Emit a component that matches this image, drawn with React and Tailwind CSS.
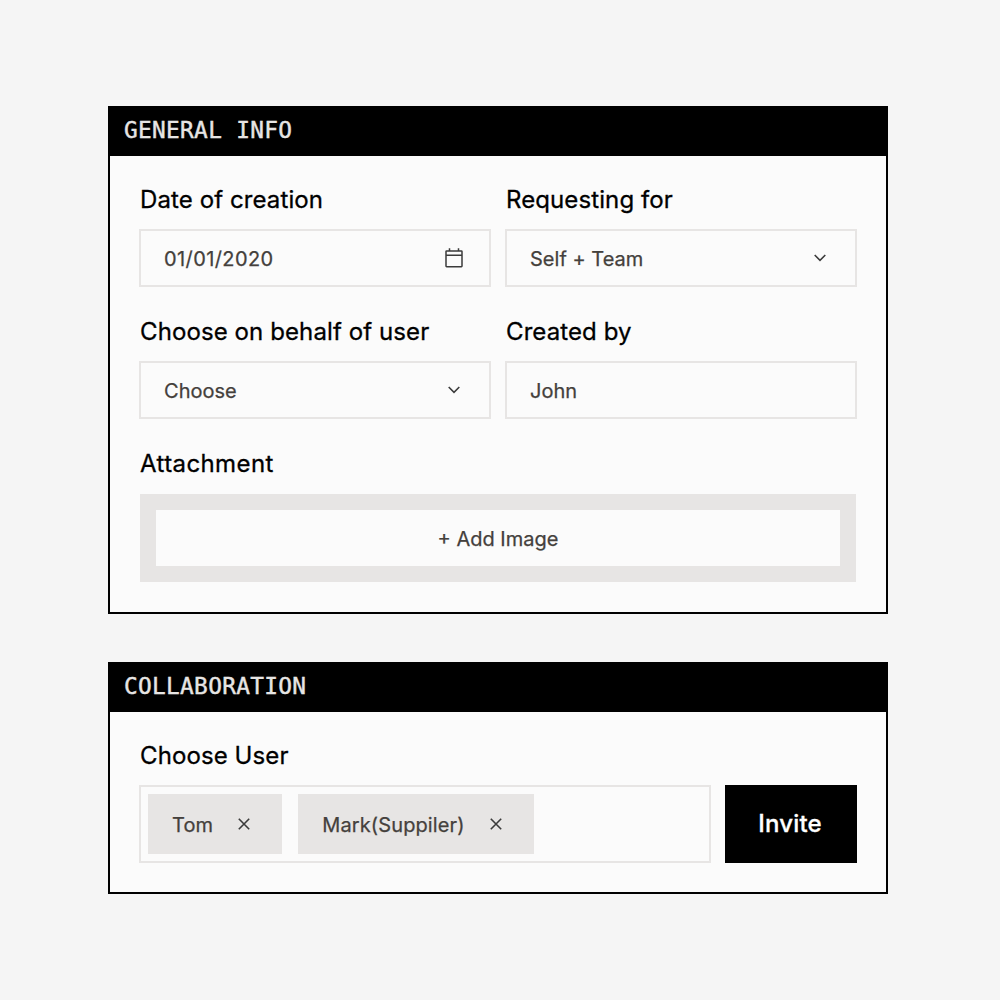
import React from 'react';

function Panel({ title, children }) {
  return (
    <section className="w-[780px] border-2 border-black bg-[#fbfbfb]">
      <h2 className="flex h-12 items-center bg-black px-3.5 pb-[3px] font-['DejaVu_Sans_Mono',monospace] text-[22.8px] tracking-[0.3px] text-[#e7e5e4] [-webkit-text-stroke:0.4px_#e7e5e4]">
        {title}
      </h2>
      {children}
    </section>
  );
}

function Chevron() {
  return (
    <svg width="24" height="24" viewBox="0 0 24 24" fill="none" stroke="#3b3b3b" strokeWidth="1.6">
      <path d="M6.7 9L12 14.3L17.3 9" />
    </svg>
  );
}

function CalendarIcon() {
  return (
    <svg width="24" height="24" viewBox="0 0 24 24" fill="none" stroke="#3b3b3b" strokeWidth="1.5">
      <rect x="4" y="5" width="16" height="15.7" rx="0.6" />
      <path d="M4 9.2H20M7.5 2.3V5M16.5 2.3V5" />
    </svg>
  );
}

function CloseIcon() {
  return (
    <svg width="14" height="14" viewBox="0 0 14 14" fill="none" stroke="#3b3b3b" strokeWidth="1.6">
      <path d="M1.8 1.8L12.2 12.2M12.2 1.8L1.8 12.2" />
    </svg>
  );
}

function Label({ children, className = 'tracking-[0.1px]' }) {
  return (
    <div className={`pl-px text-2xl leading-7 text-black [-webkit-text-stroke:0.3px_#000] ${className}`}>
      {children}
    </div>
  );
}

function Field({ label, value, icon, valueClass = 'tracking-[0.02px]' }) {
  return (
    <div>
      <Label>{label}</Label>
      <div className="mt-[15px] flex h-[58px] items-center justify-between border-2 border-[#e7e5e4] px-[23px] text-xl">
        <span className={`pt-0.5 ${valueClass}`}>{value}</span>
        {icon}
      </div>
    </div>
  );
}

function Tag({ name }) {
  return (
    <div className="flex h-[60px] items-center gap-6 bg-[#e7e5e4] pl-6 pr-[31px]">
      <span className="pt-0.5 tracking-[0.12px]">{name}</span>
      <CloseIcon />
    </div>
  );
}

export default function App() {
  return (
    <main className="flex h-[1000px] w-[1000px] flex-col gap-12 bg-[#f5f5f5] pl-[108px] pt-[106px] font-['Inter',sans-serif] text-[#44403c] [-webkit-text-stroke:0.25px_#44403c]">
      <Panel title="GENERAL INFO">
        <div className="px-[29px] py-[30px]">
          <div className="grid grid-cols-[352px_352px] gap-x-3.5 gap-y-[31px]">
            <Field
              label="Date of creation"
              value="01/01/2020"
              valueClass="tracking-[0.4px]"
              icon={<CalendarIcon />}
            />
            <Field label="Requesting for" value="Self + Team" icon={<Chevron />} />
            <Field label="Choose on behalf of user" value="Choose" icon={<Chevron />} />
            <Field label="Created by" value="John" />
          </div>
          <Label className="mt-[31px] tracking-[0.4px]">Attachment</Label>
          <div className="mx-px mt-4 bg-[#e7e5e4] p-4">
            <button className="h-14 w-full bg-[#fbfbfb] pt-0.5 text-xl">+ Add Image</button>
          </div>
        </div>
      </Panel>

      <Panel title="COLLABORATION">
        <div className="px-[29px] pb-[29px] pt-[30px]">
          <Label>Choose User</Label>
          <div className="mt-[15px] flex gap-3.5">
            <div className="flex h-[78px] w-[572px] items-center gap-4 border-2 border-[#e7e5e4] px-[7px] text-xl">
              <Tag name="Tom" />
              <Tag name="Mark(Suppiler)" />
            </div>
            <button className="h-[78px] w-[132px] bg-black pr-0.5 text-2xl font-medium tracking-[0.2px] text-white [-webkit-text-stroke:0.3px_#fff]">
              Invite
            </button>
          </div>
        </div>
      </Panel>
    </main>
  );
}
